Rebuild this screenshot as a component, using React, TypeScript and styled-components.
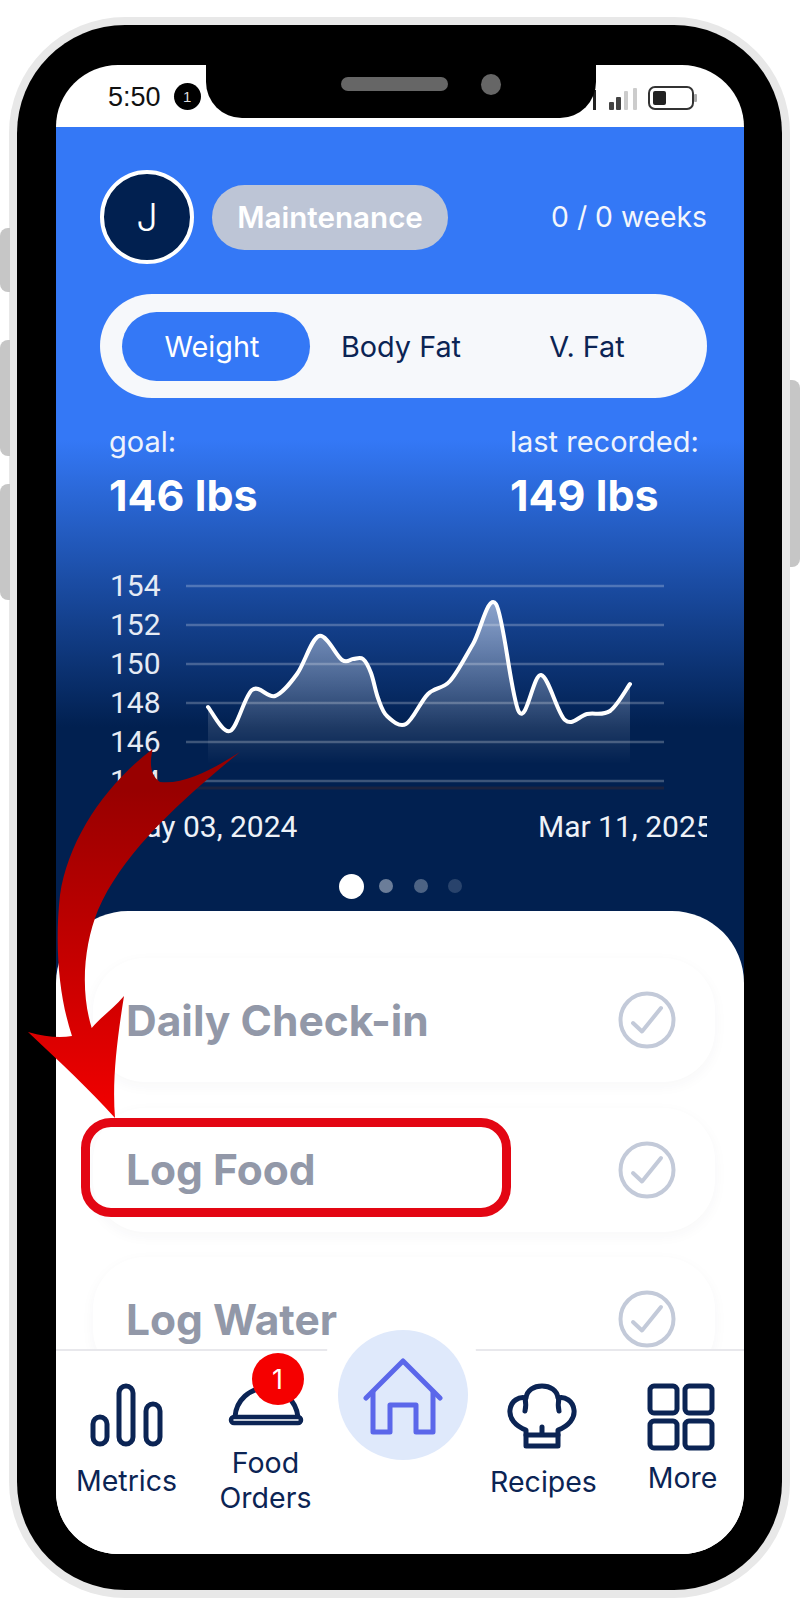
import styled, { createGlobalStyle } from 'styled-components';

const GlobalStyle = createGlobalStyle`
  html, body {
    margin: 0;
    background: #fff;
    font-family: Inter, "Liberation Sans", sans-serif;
  }
  * { box-sizing: border-box; }
`

const NAVY = '#0b2454'

const weights = [
  [207, 706], [229, 730], [251, 689], [274, 695], [296, 673], [318, 635], [341, 659], [352, 658],
  [362, 658], [370, 672], [377, 697], [386, 715], [405, 723], [427, 693], [449, 680], [472, 643], [495, 603],
  [518, 711], [540, 674], [564, 719], [586, 713], [609, 710], [629, 683],
].map(([x, y]) => [x - 185, y - 565])

// catmull-rom through the samples, written out as cubic segments
const smoothLine = (pts: number[][]) => {
  let d = `M${pts[0][0]} ${pts[0][1]}`
  for (let i = 0; i < pts.length - 1; i++) {
    const p0 = pts[i - 1] || pts[i]
    const p1 = pts[i]
    const p2 = pts[i + 1]
    const p3 = pts[i + 2] || p2
    const c1x = p1[0] + (p2[0] - p0[0]) / 6
    const c1y = p1[1] + (p2[1] - p0[1]) / 6
    const c2x = p2[0] - (p3[0] - p1[0]) / 6
    const c2y = p2[1] - (p3[1] - p1[1]) / 6
    d += ` C${c1x} ${c1y} ${c2x} ${c2y} ${p2[0]} ${p2[1]}`
  }
  return d
}

const linePath = smoothLine(weights)
const areaPath = `${linePath} L${weights[weights.length - 1][0]} 205 L${weights[0][0]} 205 Z`

const Check = () => (
  <CheckIcon viewBox="0 0 60 60">
    <circle cx="30" cy="30" r="26.5" />
    <path d="M16 33 L25 41.5 L44 18" />
  </CheckIcon>
)

const App = () => (
  <>
    <GlobalStyle />
    <Page>
      <SideButton $side="left" $top={228} $height={64} />
      <SideButton $side="left" $top={340} $height={116} />
      <SideButton $side="left" $top={484} $height={116} />
      <SideButton $side="right" $top={380} $height={187} />

      <Shell>
        <Body>
          <Screen>
            <StatusBar>
              <Time>5:50</Time>
              <NoticeDot>1</NoticeDot>
              <Notch>
                <Speaker />
                <Camera />
              </Notch>
              <StatusIcons>
                <svg width="46" height="24" viewBox="0 0 46 24">
                  <rect x="0" y="4" width="3" height="20" fill="#222" />
                  <rect x="16" y="16" width="5" height="8" rx="1" fill="#444" />
                  <rect x="23" y="11" width="5" height="13" rx="1" fill="#444" />
                  <rect x="31" y="5" width="4" height="19" rx="1" fill="#ccc" />
                  <rect x="40" y="2" width="4" height="22" rx="1" fill="#ccc" />
                </svg>
                <svg width="50" height="24" viewBox="0 0 50 24">
                  <rect x="1" y="1" width="44" height="22" rx="6" fill="none" stroke="#333" strokeWidth="2" />
                  <rect x="5" y="5" width="13" height="14" rx="2" fill="#222" />
                  <rect x="46" y="8" width="3" height="8" rx="1" fill="#aaa" />
                </svg>
              </StatusIcons>
            </StatusBar>

            <Main>
              <Hero>
                <ProfileRow>
                  <Avatar>J</Avatar>
                  <PlanPill>Maintenance</PlanPill>
                  <Weeks>0 / 0 weeks</Weeks>
                </ProfileRow>

                <Tabs>
                  <Tab $active>Weight</Tab>
                  <Tab>Body Fat</Tab>
                  <Tab>V. Fat</Tab>
                </Tabs>

                <Stats>
                  <Stat>
                    <StatLabel>goal:</StatLabel>
                    <StatValue>146 lbs</StatValue>
                  </Stat>
                  <Stat>
                    <StatLabel>last recorded:</StatLabel>
                    <StatValue>149 lbs</StatValue>
                  </Stat>
                </Stats>

                <Chart>
                  <Scale>
                    {[154, 152, 150, 148, 146, 144].map(v => <span key={v}>{v}</span>)}
                  </Scale>
                  <svg width="478" height="234" viewBox="0 0 478 234">
                    <defs>
                      <linearGradient id="area" gradientUnits="userSpaceOnUse" x1="0" y1="38" x2="0" y2="198">
                        <stop offset="0" stopColor="#fff" stopOpacity=".5" />
                        <stop offset="1" stopColor="#fff" stopOpacity="0" />
                      </linearGradient>
                    </defs>
                    {[20, 59, 98, 137, 176, 215].map(y => (
                      <line key={y} x1="0" x2="478" y1={y} y2={y} stroke="#fff" strokeOpacity=".24" strokeWidth="2.5" />
                    ))}
                    <line x1="0" x2="478" y1="222" y2="222" stroke="#1b2340" strokeWidth="3" />
                    <path d={areaPath} fill="url(#area)" />
                    <path d={linePath} fill="none" stroke="#fff" strokeWidth="4" strokeLinecap="round" strokeLinejoin="round" />
                  </svg>
                </Chart>

                <Dates>
                  <span>May 03, 2024</span>
                  <span>Mar 11, 2025</span>
                </Dates>

                <Dots>
                  <Dot $size={25} $alpha={1} $after={15} />
                  <Dot $size={14} $alpha={.42} $after={20.5} />
                  <Dot $size={14} $alpha={.3} $after={20.5} />
                  <Dot $size={14} $alpha={.16} />
                </Dots>
              </Hero>

              <Sheet>
                <Task>
                  <TaskName>Daily Check-in</TaskName>
                  <Check />
                </Task>
                <Task>
                  <Highlight />
                  <TaskName>Log Food</TaskName>
                  <Check />
                </Task>
                <Task>
                  <TaskName>Log Water</TaskName>
                  <Check />
                </Task>
              </Sheet>
            </Main>

            <Nav>
              <NavItem $gap={16}>
                <svg width="74" height="64" viewBox="0 0 74 64" fill="none" stroke={NAVY} strokeWidth="5">
                  <rect x="3" y="34" width="14" height="27" rx="7" />
                  <rect x="29" y="3" width="14" height="58" rx="7" />
                  <rect x="56" y="21" width="14" height="40" rx="7" />
                </svg>
                <NavLabel>Metrics</NavLabel>
              </NavItem>

              <NavItem $gap={19}>
                <Cloche>
                  <svg width="76" height="42" viewBox="0 0 76 42" fill="none" stroke={NAVY} strokeWidth="5">
                    <path d="M7 33 C8 16 22 4 38 4 C54 4 68 16 70 33" />
                    <rect x="3" y="33" width="70" height="6" rx="3" strokeWidth="4.5" />
                  </svg>
                  <Badge>1</Badge>
                </Cloche>
                <NavLabel>Food<br />Orders</NavLabel>
              </NavItem>

              <HomeCell>
                <HomeButton>
                  <svg width="80" height="78" viewBox="0 0 80 78" fill="none" stroke="#5b67ea" strokeWidth="5" strokeLinecap="round" strokeLinejoin="round">
                    <path d="M3 40 L40 3 L77 40" />
                    <path d="M10 34 V74 H27 V47 H53 V74 H70 V34" />
                  </svg>
                </HomeButton>
              </HomeCell>

              <NavItem $gap={15} $iconShift={-4}>
                <svg width="70" height="66" viewBox="0 0 70 66" fill="none" stroke={NAVY} strokeWidth="5" strokeLinejoin="round" strokeLinecap="round">
                  <path d="M19 47 C8 43 2 35 3 27 C4 18 12 13 19 15 C20 7 27 3 35 3 C43 3 50 7 51 15 C58 13 66 18 67 27 C68 35 62 43 51 47 V52 H19 Z" />
                  <path d="M19 52 V63 H51 V52" />
                  <path d="M18 15 C19 20 19 24 18 28 M52 15 C51 20 51 24 52 28 M35 44 V51" />
                </svg>
                <NavLabel>Recipes</NavLabel>
              </NavItem>

              <NavItem $gap={9} $iconShift={-4}>
                <svg width="68" height="68" viewBox="0 0 68 68" fill="none" stroke={NAVY} strokeWidth="5">
                  <rect x="3" y="3" width="27" height="27" rx="4" />
                  <rect x="38" y="3" width="27" height="27" rx="4" />
                  <rect x="3" y="38" width="27" height="27" rx="4" />
                  <rect x="38" y="38" width="27" height="27" rx="4" />
                </svg>
                <NavLabel>More</NavLabel>
              </NavItem>
            </Nav>
          </Screen>
        </Body>
      </Shell>

      {/* curved pointer running from the chart down to the food row */}
      <Pointer width="260" height="1130" viewBox="0 0 260 1130">
        <defs>
          <linearGradient id="pointer" gradientUnits="userSpaceOnUse" x1="0" y1="790" x2="0" y2="1118">
            <stop offset="0" stopColor="#980000" />
            <stop offset=".4" stopColor="#bb0000" />
            <stop offset="1" stopColor="#f20000" />
          </linearGradient>
        </defs>
        <path
          fill="url(#pointer)"
          d="M152.7 749 C149 765 151 776 160 782 C185 785 215 768 240 752 C175 805 122 855 98 910 C84 945 80 990 91.7 1028 C102 1016 114 1008 124 996 C117 1040 112 1080 115 1118 C90 1090 60 1062 28 1032 C45 1037 60 1038 72 1036 C60 1000 54 950 60 895 C68 840 105 785 152.7 749 Z"
        />
      </Pointer>
    </Page>
  </>
)

const Page = styled.div`
  position: relative;
  width: 800px;
  height: 1600px;
  padding: 17px 10px 2px 9px;
  overflow: hidden;
`

const SideButton = styled.div<{ $side: 'left' | 'right'; $top: number; $height: number }>`
  position: absolute;
  top: ${p => p.$top}px;
  ${p => p.$side}: 0;
  width: 10px;
  height: ${p => p.$height}px;
  background: #c6c6c6;
  border-radius: ${p => (p.$side === 'left' ? '8px 0 0 8px' : '0 8px 8px 0')};
`

const Shell = styled.div`
  height: 100%;
  padding: 8px;
  background: #e8e8e8;
  border-radius: 116px;
`

const Body = styled.div`
  height: 100%;
  padding: 40px 38px 36px 39px;
  background: #000;
  border-radius: 108px;
`

const Screen = styled.div`
  position: relative;
  display: flex;
  flex-direction: column;
  height: 100%;
  background: #fff;
  border-radius: 62px;
  overflow: hidden;
`

const StatusBar = styled.div`
  position: relative;
  display: flex;
  align-items: center;
  flex: 0 0 62px;
  padding: 0 46px 0 52px;
  gap: 13px;
`

const Time = styled.span`
  font: 27px "Liberation Sans", sans-serif;
  color: #111;
  margin-top: 2px;
`

const NoticeDot = styled.span`
  display: flex;
  align-items: center;
  justify-content: center;
  width: 27px;
  height: 27px;
  border-radius: 50%;
  background: #000;
  color: #ddd;
  font: 15px "Liberation Sans", sans-serif;
`

const Notch = styled.div`
  position: absolute;
  top: 0;
  left: 150px;
  width: 390px;
  height: 53px;
  display: flex;
  align-items: flex-start;
  justify-content: center;
  gap: 33px;
  padding: 9px 0 0 40px;
  background: #000;
  border-radius: 0 0 36px 36px;
`

const Speaker = styled.div`
  width: 107px;
  height: 14px;
  margin-top: 3px;
  border-radius: 7px;
  background: #666;
`

const Camera = styled.div`
  width: 20px;
  height: 21px;
  border-radius: 50%;
  background: #666;
`

const StatusIcons = styled.div`
  display: flex;
  align-items: flex-end;
  gap: 9px;
  margin-left: auto;
  margin-top: 4px;
`

const Main = styled.div`
  flex: 1;
  min-height: 0;
  overflow: hidden;
  background: linear-gradient(#3478f6 313px, #012050 600px);
`

const Hero = styled.div`
  padding: 43px 37px 0 44px;
`

const ProfileRow = styled.div`
  display: flex;
  align-items: center;
  height: 94px;
`

const Avatar = styled.div`
  display: flex;
  align-items: center;
  justify-content: center;
  flex: none;
  width: 94px;
  height: 94px;
  border: 4px solid #fff;
  border-radius: 50%;
  background: #012050;
  color: #fff;
  font-size: 38px;
  font-weight: 300;
`

const PlanPill = styled.div`
  display: flex;
  align-items: center;
  justify-content: center;
  width: 236px;
  height: 65px;
  margin-left: 18px;
  border-radius: 33px;
  background: #bdc5d6;
  color: #fff;
  font-size: 29.6px;
  font-weight: 600;
`

const Weeks = styled.div`
  margin-left: auto;
  color: #f3f6fc;
  font-size: 28.3px;
`

const Tabs = styled.div`
  display: grid;
  grid-template-columns: 188px 190px 182px;
  align-items: center;
  height: 104px;
  margin-top: 30px;
  padding: 0 22px;
  border-radius: 52px;
  background: #f6f8fb;
`

const Tab = styled.div<{ $active?: boolean }>`
  display: flex;
  align-items: center;
  justify-content: center;
  height: 69px;
  padding-right: 8px;
  border-radius: 35px;
  background: ${p => (p.$active ? '#3478f6' : 'transparent')};
  color: ${p => (p.$active ? '#fff' : '#0b2454')};
  font-size: 28.8px;
`

const Stats = styled.div`
  display: grid;
  grid-template-columns: 401px 1fr;
  margin-top: 26px;
  padding-left: 9px;
  color: #fff;
`

const Stat = styled.div`
  display: flex;
  flex-direction: column;
  white-space: nowrap;
`

const StatLabel = styled.span`
  font-size: 29px;
  line-height: 36px;
  color: #eef3fc;
`

const StatValue = styled.span`
  margin-top: 11px;
  font-size: 43px;
  line-height: 48px;
  font-weight: 700;
`

const Chart = styled.div`
  display: flex;
  margin-top: 47px;
`

const Scale = styled.div`
  display: flex;
  flex-direction: column;
  flex: 0 0 86px;
  padding-left: 10px;
  margin-bottom: -10px;
  font: 30px Roboto, sans-serif;
  color: #e6ebf4;

  span { line-height: 39px; }
`

const Dates = styled.div`
  display: grid;
  grid-template-columns: 419px auto;
  margin-top: 9px;
  padding-left: 19px;
  overflow: hidden;
  white-space: nowrap;
  font: 30px/36px Roboto, sans-serif;
  color: #eef2f8;
`

const Dots = styled.div`
  display: flex;
  align-items: center;
  height: 26px;
  margin: 28px 0 12px 0;
  padding-left: 239px;
`

const Dot = styled.div<{ $size: number; $alpha: number; $after?: number }>`
  width: ${p => p.$size}px;
  height: ${p => p.$size}px;
  margin-right: ${p => p.$after ?? 0}px;
  border-radius: 50%;
  background: rgba(255, 255, 255, ${p => p.$alpha});
`

const Sheet = styled.div`
  display: flex;
  flex-direction: column;
  gap: 25.5px;
  height: 700px;
  padding: 47px 29px 0 37px;
  background: #fff;
  border-radius: 72px 72px 0 0;
`

const Task = styled.div`
  position: relative;
  display: flex;
  align-items: center;
  justify-content: space-between;
  flex: 0 0 124px;
  padding: 0 38px 0 33px;
  background: #fff;
  border-radius: 52px;
  box-shadow: 0 4px 14px rgba(40, 50, 80, .04);
`

const TaskName = styled.span`
  font-size: 42.5px;
  font-weight: 700;
  color: #9298a8;
`

const CheckIcon = styled.svg`
  width: 60px;
  height: 60px;
  fill: none;
  stroke: #c3cad9;
  stroke-width: 4;
  stroke-linecap: round;
  stroke-linejoin: round;
`

const Highlight = styled.div`
  position: absolute;
  top: 10px;
  left: -12px;
  width: 430px;
  height: 99px;
  border: 9px solid #e30613;
  border-radius: 30px;
`

const Nav = styled.nav`
  position: relative;
  display: grid;
  grid-template-columns: repeat(5, 139px);
  flex: 0 0 205px;
  margin-right: -8px;
  padding-left: 1px;
  background: #fff;
  border-top: 2px solid #e8e8ec;
`

const NavItem = styled.div<{ $gap: number; $iconShift?: number }>`
  display: flex;
  flex-direction: column;
  align-items: center;
  gap: ${p => p.$gap}px;
  padding-top: 32px;

  & > svg { margin-left: ${p => p.$iconShift ?? 0}px; }
`

const NavLabel = styled.span`
  font-size: 28.5px;
  line-height: 35px;
  text-align: center;
  color: ${NAVY};
`

const Cloche = styled.div`
  position: relative;
  height: 42px;
  margin-top: 1px;
`

const Badge = styled.div`
  position: absolute;
  top: -31px;
  left: 24px;
  display: flex;
  align-items: center;
  justify-content: center;
  width: 52px;
  height: 52px;
  border-radius: 50%;
  background: #f50000;
  color: #fff;
  font-size: 27px;
`

const HomeCell = styled.div`
  position: relative;

  /* white cap that interrupts the bar's top rule behind the button */
  &::before {
    content: '';
    position: absolute;
    top: -29px;
    left: -8px;
    width: 149px;
    height: 30px;
    border-radius: 60px 60px 0 0;
    background: #fff;
  }
`

const HomeButton = styled.div`
  position: absolute;
  top: -21px;
  left: 3px;
  display: flex;
  align-items: center;
  justify-content: center;
  width: 130px;
  height: 130px;
  padding-top: 3px;
  border-radius: 50%;
  background: #dfe9fb;
`

const Pointer = styled.svg`
  position: absolute;
  top: 0;
  left: 0;
  pointer-events: none;
`

export default App
